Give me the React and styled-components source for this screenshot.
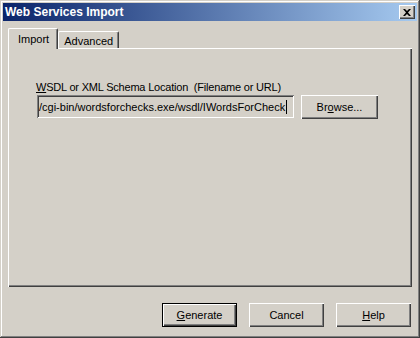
import React from 'react'
import styled, { createGlobalStyle } from 'styled-components'

const GlobalStyle = createGlobalStyle`
  html, body {
    margin: 0;
    padding: 0;
    background: #d4d0c8;
  }
  body {
    font-family: "Liberation Sans", Arial, sans-serif;
    font-size: 11px;
    color: #000;
  }
`

export default function App() {
  return (
    <>
      <GlobalStyle />
      <Window>
        <TitleBar>
          <Title>Web Services Import</Title>
          <CloseButton aria-label="Close">
            <svg width="8" height="7" viewBox="0 0 8 7">
              <path d="M0 0h2l2 2 2-2h2L5 3.5 8 7H6L4 5 2 7H0l3-3.5z" fill="#000" />
            </svg>
          </CloseButton>
        </TitleBar>
        <Body>
          <TabStrip>
            <Tab $active>Import</Tab>
            <Tab>Advanced</Tab>
          </TabStrip>
          <Panel>
            <Label><U>W</U>SDL or XML Schema Location&nbsp; (Filename or URL)</Label>
            <FieldRow>
              <Field>
                <FieldText>/cgi-bin/wordsforchecks.exe/wsdl/IWordsForCheck</FieldText>
                <Caret />
              </Field>
              <Button $width={77}>Br<U>o</U>wse...</Button>
            </FieldRow>
          </Panel>
          <Footer>
            <Button $default><U>G</U>enerate</Button>
            <Button>Cancel</Button>
            <Button><U>H</U>elp</Button>
          </Footer>
        </Body>
      </Window>
    </>
  )
}

const Window = styled.div`
  width: 420px;
  height: 338px;
  box-sizing: border-box;
  padding: 3px;
  background: #d4d0c8;
  box-shadow: inset -1px -1px #404040, inset 1px 1px #d4d0c8,
    inset -2px -2px #808080, inset 2px 2px #fff;
  display: flex;
  flex-direction: column;
`

const TitleBar = styled.div`
  height: 18px;
  display: flex;
  align-items: center;
  justify-content: space-between;
  padding: 0 2px;
  background: linear-gradient(to right, #0a246a, #a6caf0);
`

const Title = styled.span`
  color: #fff;
  font-weight: bold;
  font-size: 12px;
  line-height: 18px;
`

const CloseButton = styled.div`
  width: 16px;
  height: 14px;
  box-sizing: border-box;
  display: flex;
  align-items: center;
  justify-content: center;
  background: #d4d0c8;
  box-shadow: inset 1px 1px #fff, inset -1px -1px #404040, inset -2px -2px #808080;
`

const Body = styled.div`
  flex: 1;
  padding: 7px 5px 0;
  display: flex;
  flex-direction: column;
`

const TabStrip = styled.div`
  height: 20px;
  display: flex;
  align-items: flex-end;
  position: relative;
  z-index: 1;
`

const Tab = styled.div`
  box-sizing: border-box;
  height: ${p => (p.$active ? 21 : 17)}px;
  margin-bottom: ${p => (p.$active ? -1 : 0)}px;
  padding: ${p => (p.$active ? '3px 8px 0 9px' : '2px 5px 0 5px')};
  line-height: 14px;
  background: #d4d0c8;
  border-top: 1px solid #fff;
  border-left: 1px solid #fff;
  border-right: 1px solid #404040;
  border-top-left-radius: 2px;
  border-top-right-radius: 2px;
  box-shadow: inset -1px 0 #808080;
`

const Panel = styled.div`
  height: 239px;
  box-sizing: border-box;
  padding: 33px 0 0 28px;
  box-shadow: inset 1px 1px #fff, inset -1px -1px #404040, inset -2px -2px #808080;
`

const Label = styled.div`
  line-height: 13px;
  letter-spacing: -0.2px;
  white-space: nowrap;
`

const U = styled.span`
  text-decoration: underline;
`

const FieldRow = styled.div`
  display: flex;
  align-items: flex-start;
  gap: 7px;
  margin: 1px 0 0 1px;
`

const Field = styled.div`
  width: 257px;
  height: 23px;
  box-sizing: border-box;
  padding: 0 2px;
  display: flex;
  align-items: center;
  overflow: hidden;
  white-space: nowrap;
  box-shadow: inset 1px 1px #808080, inset -1px -1px #fff,
    inset 2px 2px #404040, inset -2px -2px #d4d0c8;
`

const FieldText = styled.span`
  line-height: 14px;
`

const Caret = styled.span`
  width: 1px;
  height: 14px;
  margin-left: 1px;
  background: #000;
  flex: none;
`

const Button = styled.button`
  width: ${p => p.$width || 75}px;
  height: 24px;
  box-sizing: border-box;
  padding: 0;
  border: 0;
  background: #d4d0c8;
  font: inherit;
  color: #000;
  box-shadow: ${p =>
    p.$default
      ? 'inset 0 0 0 1px #000, inset 2px 2px #fff, inset -2px -2px #404040, inset -3px -3px #808080'
      : 'inset 1px 1px #fff, inset -1px -1px #404040, inset -2px -2px #808080'};
`

const Footer = styled.div`
  display: flex;
  justify-content: flex-end;
  gap: 12px;
  margin: 16px 1px 0 0;
`
